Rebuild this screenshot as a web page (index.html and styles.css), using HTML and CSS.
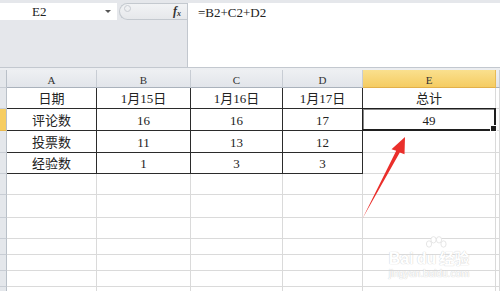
FILE: index.html
```html
<!DOCTYPE html>
<html>
<head>
<meta charset="utf-8">
<link rel="stylesheet" href="styles.css">
</head>
<body>
<div class="app">
  <div class="fbar">
    <div class="fleft">
      <div class="namerow">
        <div class="namebox"><span class="ref">E2</span><span class="dd"></span></div>
        <div class="grip"><span class="knob"></span><span class="fx"><i>f</i><sub>x</sub></span></div>
      </div>
    </div>
    <div class="formula">=B2+C2+D2</div>
  </div>
  <div class="sep"></div>
  <div class="sheet">
    <div class="rh corner"></div><div class="ch">A</div><div class="ch">B</div><div class="ch">C</div><div class="ch">D</div><div class="ch sel">E</div><div class="ch"></div>

    <div class="rh"></div><div class="c t">日期</div><div class="c t">1月15日</div><div class="c t">1月16日</div><div class="c t">1月17日</div><div class="c">总计</div><div class="c"></div>

    <div class="rh sel"></div><div class="c t">评论数</div><div class="c t">16</div><div class="c t">16</div><div class="c t">17</div><div class="c active">49<span class="selbox"><span class="handle"></span></span></div><div class="c"></div>

    <div class="rh"></div><div class="c t">投票数</div><div class="c t">11</div><div class="c t">13</div><div class="c t">12</div><div class="c"></div><div class="c"></div>

    <div class="rh"></div><div class="c t">经验数</div><div class="c t">1</div><div class="c t">3</div><div class="c t">3</div><div class="c"></div><div class="c"></div>

    <div class="rh"></div><div class="c"></div><div class="c"></div><div class="c"></div><div class="c"></div><div class="c"></div><div class="c"></div>
    <div class="rh"></div><div class="c"></div><div class="c"></div><div class="c"></div><div class="c"></div><div class="c"></div><div class="c"></div>
    <div class="rh"></div><div class="c"></div><div class="c"></div><div class="c"></div><div class="c"></div><div class="c"></div><div class="c"></div>
    <div class="rh"></div><div class="c"></div><div class="c"></div><div class="c"></div><div class="c"></div><div class="c"></div><div class="c"></div>
    <div class="rh"></div><div class="c"></div><div class="c"></div><div class="c"></div><div class="c"></div><div class="c"></div><div class="c"></div>
    <div class="rh"></div><div class="c"></div><div class="c"></div><div class="c"></div><div class="c"></div><div class="c"></div><div class="c"></div>
    <div class="rh"></div><div class="c"></div><div class="c"></div><div class="c"></div><div class="c"></div><div class="c"></div><div class="c"></div>
  </div>

  <svg class="arrow" viewBox="0 0 500 291" width="500" height="291">
    <polygon points="362.5,218.5 396.2,150.8 391.5,149.2 405,137 404.5,154.2 399.8,152.6" fill="#ea2f2b"/>
  </svg>

  <div class="watermark">
    <svg class="paw" viewBox="0 0 24 18" width="24" height="18">
      <g fill="#fff" stroke="#e0e0e0" stroke-width="0.8">
        <ellipse cx="5" cy="8" rx="2.6" ry="3.2"/>
        <ellipse cx="9.5" cy="3.8" rx="2.6" ry="3.2"/>
        <ellipse cx="15" cy="3.8" rx="2.6" ry="3.2"/>
        <ellipse cx="19.5" cy="8" rx="2.6" ry="3.2"/>
      </g>
    </svg>
    <div class="wm-logo"><span>Bai</span><span class="du">du</span><span class="jy">经验</span></div>
    <div class="wm-url">jingyan.baidu.com</div>
  </div>
</div>
</body>
</html>
```

FILE: styles.css
```css
html, body {
  margin: 0;
  padding: 0;
  background: #fff;
}
.app {
  position: relative;
  width: 500px;
  height: 291px;
  overflow: hidden;
  font-family: "Liberation Serif", "Noto Sans CJK SC", serif;
  color: #222;
}
.fbar {
  display: flex;
  height: 67px;
  padding-top: 3px;
  box-sizing: border-box;
  background: #e5e7eb;
}
.fleft {
  width: 187px;
  flex: none;
}
.namerow {
  display: flex;
  height: 17px;
}
.namebox {
  width: 117px;
  background: #fff;
  display: flex;
  align-items: center;
  position: relative;
  font-size: 13px;
}
.ref {
  padding-left: 32px;
  flex: 1;
}
.dd {
  width: 0;
  height: 0;
  border-left: 3px solid transparent;
  border-right: 3px solid transparent;
  border-top: 3px solid #555;
  margin-right: 6px;
}
.grip {
  flex: 1;
  margin-left: 2px;
  display: flex;
  align-items: center;
  justify-content: space-between;
  border: 1px solid #c4c9cf;
  border-right: none;
  border-radius: 9px 0 0 9px;
  background: linear-gradient(#f2f3f5, #e6e8eb);
  box-sizing: border-box;
}
.knob {
  width: 5px;
  height: 5px;
  border-radius: 50%;
  border: 1px solid #c8ccd2;
  margin: 0 0 6px 4px;
}
.fx {
  font-family: "Liberation Serif", serif;
  font-size: 12px;
  font-weight: bold;
  color: #333;
  margin-right: 6px;
}
.fx sub {
  font-size: 8px;
  font-style: italic;
  vertical-align: -1px;
}
.formula {
  flex: 1;
  background: #fff;
  border-left: 1px solid #c2c7ce;
  font-size: 13px;
  padding: 2px 0 0 10px;
}
.sep {
  height: 2px;
  border-top: 1px solid #c3c8cf;
  background: #eceef1;
}
.sheet {
  display: grid;
  grid-template-columns: 7px 90px 94px 92px 80px 133px 1fr;
  grid-template-rows: 18px 21px 22px 22px 21px 21px 23px 21px 16px 16px 16px 16px;
}
.rh {
  background: #e4e7eb;
  border-right: 1px solid #b9c0c8;
  border-bottom: 1px solid #c8cdd4;
  box-sizing: border-box;
}
.rh.sel {
  background: #f6cd62;
  border-bottom-color: #e9b84e;
}
.ch {
  background: linear-gradient(#eef0f3, #e2e5ea);
  border-right: 1px solid #c8cdd4;
  border-bottom: 1px solid #aab2bc;
  box-sizing: border-box;
  display: flex;
  align-items: center;
  justify-content: center;
  font-size: 11px;
  color: #333;
  padding-top: 2px;
}
.ch.sel {
  background: linear-gradient(#fae08e, #f5cc62);
  border-right-color: #e8bb55;
  border-bottom-color: #e2b04a;
}
.c {
  border-right: 1px solid #dadada;
  border-bottom: 1px solid #dadada;
  box-sizing: border-box;
  display: flex;
  align-items: flex-end;
  justify-content: center;
  font-size: 13px;
  line-height: 1;
  padding-bottom: 3px;
}
.c.t {
  border-right-color: #2b2b2b;
  border-bottom-color: #2b2b2b;
}
.active {
  position: relative;
}
.selbox {
  position: absolute;
  left: -1px;
  top: -1px;
  right: -1px;
  bottom: -1px;
  border: 2px solid #1f1f1f;
  border-top-width: 1px;
  border-left-width: 1px;
  box-shadow: inset 1px 1px 0 #8a8a8a;
}
.handle {
  position: absolute;
  right: -3px;
  bottom: -3px;
  width: 5px;
  height: 5px;
  background: #1f1f1f;
  border: 1px solid #fff;
}
.arrow {
  position: absolute;
  left: 0;
  top: 0;
  pointer-events: none;
}
.watermark {
  position: absolute;
  left: 383px;
  top: 236px;
  width: 92px;
  display: flex;
  flex-direction: column;
  align-items: center;
  color: #fff;
  font-family: "Liberation Sans", "Noto Sans CJK SC", sans-serif;
}
.paw {
  margin-left: 14px;
  margin-bottom: -3px;
}
.wm-logo {
  display: flex;
  align-items: baseline;
  font-size: 16px;
  font-weight: bold;
  line-height: 16px;
  text-shadow: 0 0 1px #d4d4d4, 0 0 1px #d4d4d4;
}
.wm-logo .du {
  margin-left: 3px;
}
.wm-logo .jy {
  margin-left: 3px;
  font-size: 15px;
}
.wm-url {
  font-size: 10px;
  line-height: 12px;
  margin-top: 1px;
  text-shadow: 0 0 1px #d0d0d0, 0 0 1px #d0d0d0;
}
```
